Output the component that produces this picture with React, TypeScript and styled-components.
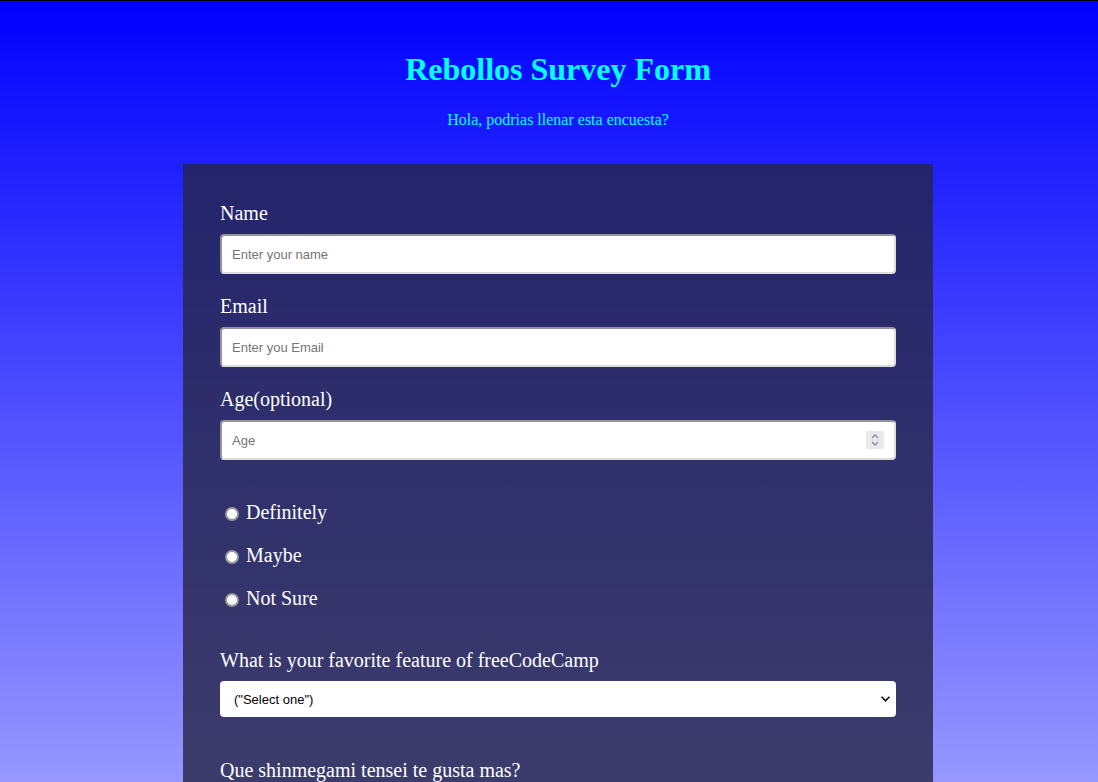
import React from "react";
import styled, { createGlobalStyle } from "styled-components";

const GlobalStyle = createGlobalStyle`
  html {
    background: linear-gradient(#0000ff, #9797ff) fixed;
    min-height: 100%;
  }
  body {
    margin: 0;
    border-top: 1px solid #000;
    font-family: "Liberation Serif", "Times New Roman", serif;
  }
`;

const Page = styled.div`
  padding: 50px 0 60px 18px;
`;

const Header = styled.header`
  text-align: center;
  color: #00ffff;
`;

const Title = styled.h1`
  margin: 0;
  font: 700 32px/37px "Liberation Serif", "Times New Roman", serif;
`;

const Subtitle = styled.p`
  margin: 23px 0 0;
  font: 400 16px/18px "Liberation Serif", "Times New Roman", serif;
`;

const Panel = styled.form`
  box-sizing: border-box;
  width: 750px;
  margin: 35px auto 0;
  padding: 37px;
  background: rgba(38, 38, 71, 0.8);
  color: #fff;
  display: flex;
  flex-direction: column;
`;

const Label = styled.label<{ $top?: number }>`
  display: block;
  font-size: 20px;
  line-height: 23px;
  padding-top: 1px;
  margin-top: ${(p) => p.$top ?? 0}px;
  margin-bottom: 9px;
`;

const FieldBox = styled.div`
  position: relative;
  margin-bottom: 20px;
`;

const TextInput = styled.input`
  box-sizing: border-box;
  width: 100%;
  height: 40px;
  padding: 0 10px;
  border-width: 2px;
  border-style: solid;
  border-color: #949494 #dcdcdc #dcdcdc #949494;
  border-radius: 4px;
  background: #fff;
  font: 13px "Liberation Sans", Arial, sans-serif;
  color: #000;
  outline: none;
  -moz-appearance: textfield;
  &::placeholder {
    color: #757575;
  }
  &::-webkit-inner-spin-button,
  &::-webkit-outer-spin-button {
    -webkit-appearance: none;
    margin: 0;
  }
`;

const Spinner = styled.span`
  position: absolute;
  right: 12px;
  top: 11px;
  width: 18px;
  height: 18px;
  border-radius: 2px;
  background: #e9e9ed;
  display: flex;
  align-items: center;
  justify-content: center;
`;

const RadioGroup = styled.div<{ $top: number }>`
  display: flex;
  flex-direction: column;
  gap: 20px;
  margin-top: ${(p) => p.$top}px;
`;

const RadioRow = styled.label`
  display: flex;
  align-items: center;
  font-size: 20px;
  line-height: 23px;
`;

const Radio = styled.input`
  appearance: none;
  -webkit-appearance: none;
  box-sizing: border-box;
  width: 14px;
  height: 14px;
  margin: 3px 7px 0 5px;
  border-radius: 50%;
  background: #fff;
  border: 2.5px solid #9a9a9a;
  flex: none;
`;

const SelectBox = styled.div`
  position: relative;
`;

const Select = styled.select`
  box-sizing: border-box;
  width: 100%;
  height: 36px;
  padding: 0 0 0 14px;
  border: none;
  border-radius: 4px;
  background: #fff;
  color: #000;
  font: 13px "Liberation Sans", Arial, sans-serif;
  appearance: none;
  -webkit-appearance: none;
  outline: none;
`;

const Chevron = styled.svg`
  position: absolute;
  right: 5px;
  top: 14px;
  pointer-events: none;
`;

const TextArea = styled.textarea`
  box-sizing: border-box;
  width: 100%;
  height: 120px;
  margin-top: 10px;
  border-radius: 4px;
  font: 13px "Liberation Sans", Arial, sans-serif;
`;

const Submit = styled.button`
  margin-top: 30px;
  height: 40px;
  border: none;
  border-radius: 4px;
  background: #37af65;
  color: #fff;
  font: 18px "Liberation Serif", serif;
`;

export default function App() {
  return (
    <>
      <GlobalStyle />
      <Page>
        <Header>
          <Title>Rebollos Survey Form</Title>
          <Subtitle>Hola, podrias llenar esta encuesta?</Subtitle>
        </Header>
        <Panel onSubmit={(e) => e.preventDefault()}>
          <Label htmlFor="name">Name</Label>
          <FieldBox>
            <TextInput id="name" type="text" placeholder="Enter your name" />
          </FieldBox>
          <Label htmlFor="email">Email</Label>
          <FieldBox>
            <TextInput id="email" type="email" placeholder="Enter you Email" />
          </FieldBox>
          <Label htmlFor="age">Age(optional)</Label>
          <FieldBox>
            <TextInput id="age" type="number" placeholder="Age" />
            <Spinner aria-hidden>
              <svg width="10" height="14" viewBox="0 0 10 14">
                <path d="M2 5 L5 2 L8 5" fill="none" stroke="#8d8d9b" strokeWidth="1.3" />
                <path d="M2 9 L5 12 L8 9" fill="none" stroke="#8d8d9b" strokeWidth="1.3" />
              </svg>
            </Spinner>
          </FieldBox>

          <RadioGroup $top={21}>
            <RadioRow>
              <Radio type="radio" name="rec" value="definitely" />
              Definitely
            </RadioRow>
            <RadioRow>
              <Radio type="radio" name="rec" value="maybe" />
              Maybe
            </RadioRow>
            <RadioRow>
              <Radio type="radio" name="rec" value="notsure" />
              Not Sure
            </RadioRow>
          </RadioGroup>

          <Label htmlFor="feature" $top={38}>
            What is your favorite feature of freeCodeCamp
          </Label>
          <SelectBox>
            <Select id="feature" defaultValue="">
              <option value="">("Select one")</option>
              <option value="challenges">Challenges</option>
              <option value="projects">Projects</option>
              <option value="community">Community</option>
            </Select>
            <Chevron width="11" height="8" viewBox="0 0 11 8">
              <path d="M1.5 1.8 L5.5 5.8 L9.5 1.8" fill="none" stroke="#111" strokeWidth="1.6" />
            </Chevron>
          </SelectBox>

          <Label $top={41}>Que shinmegami tensei te gusta mas?</Label>
          <RadioGroup $top={10}>
            <RadioRow>
              <Radio type="radio" name="smt" value="p3" />
              Persona 3
            </RadioRow>
            <RadioRow>
              <Radio type="radio" name="smt" value="p4" />
              Persona 4
            </RadioRow>
            <RadioRow>
              <Radio type="radio" name="smt" value="p5" />
              Persona 5
            </RadioRow>
          </RadioGroup>

          <Label htmlFor="comments" $top={30}>
            Comentarios
          </Label>
          <TextArea id="comments" placeholder="Escribe aqui..." />
          <Submit type="submit">Submit</Submit>
        </Panel>
      </Page>
    </>
  );
}
